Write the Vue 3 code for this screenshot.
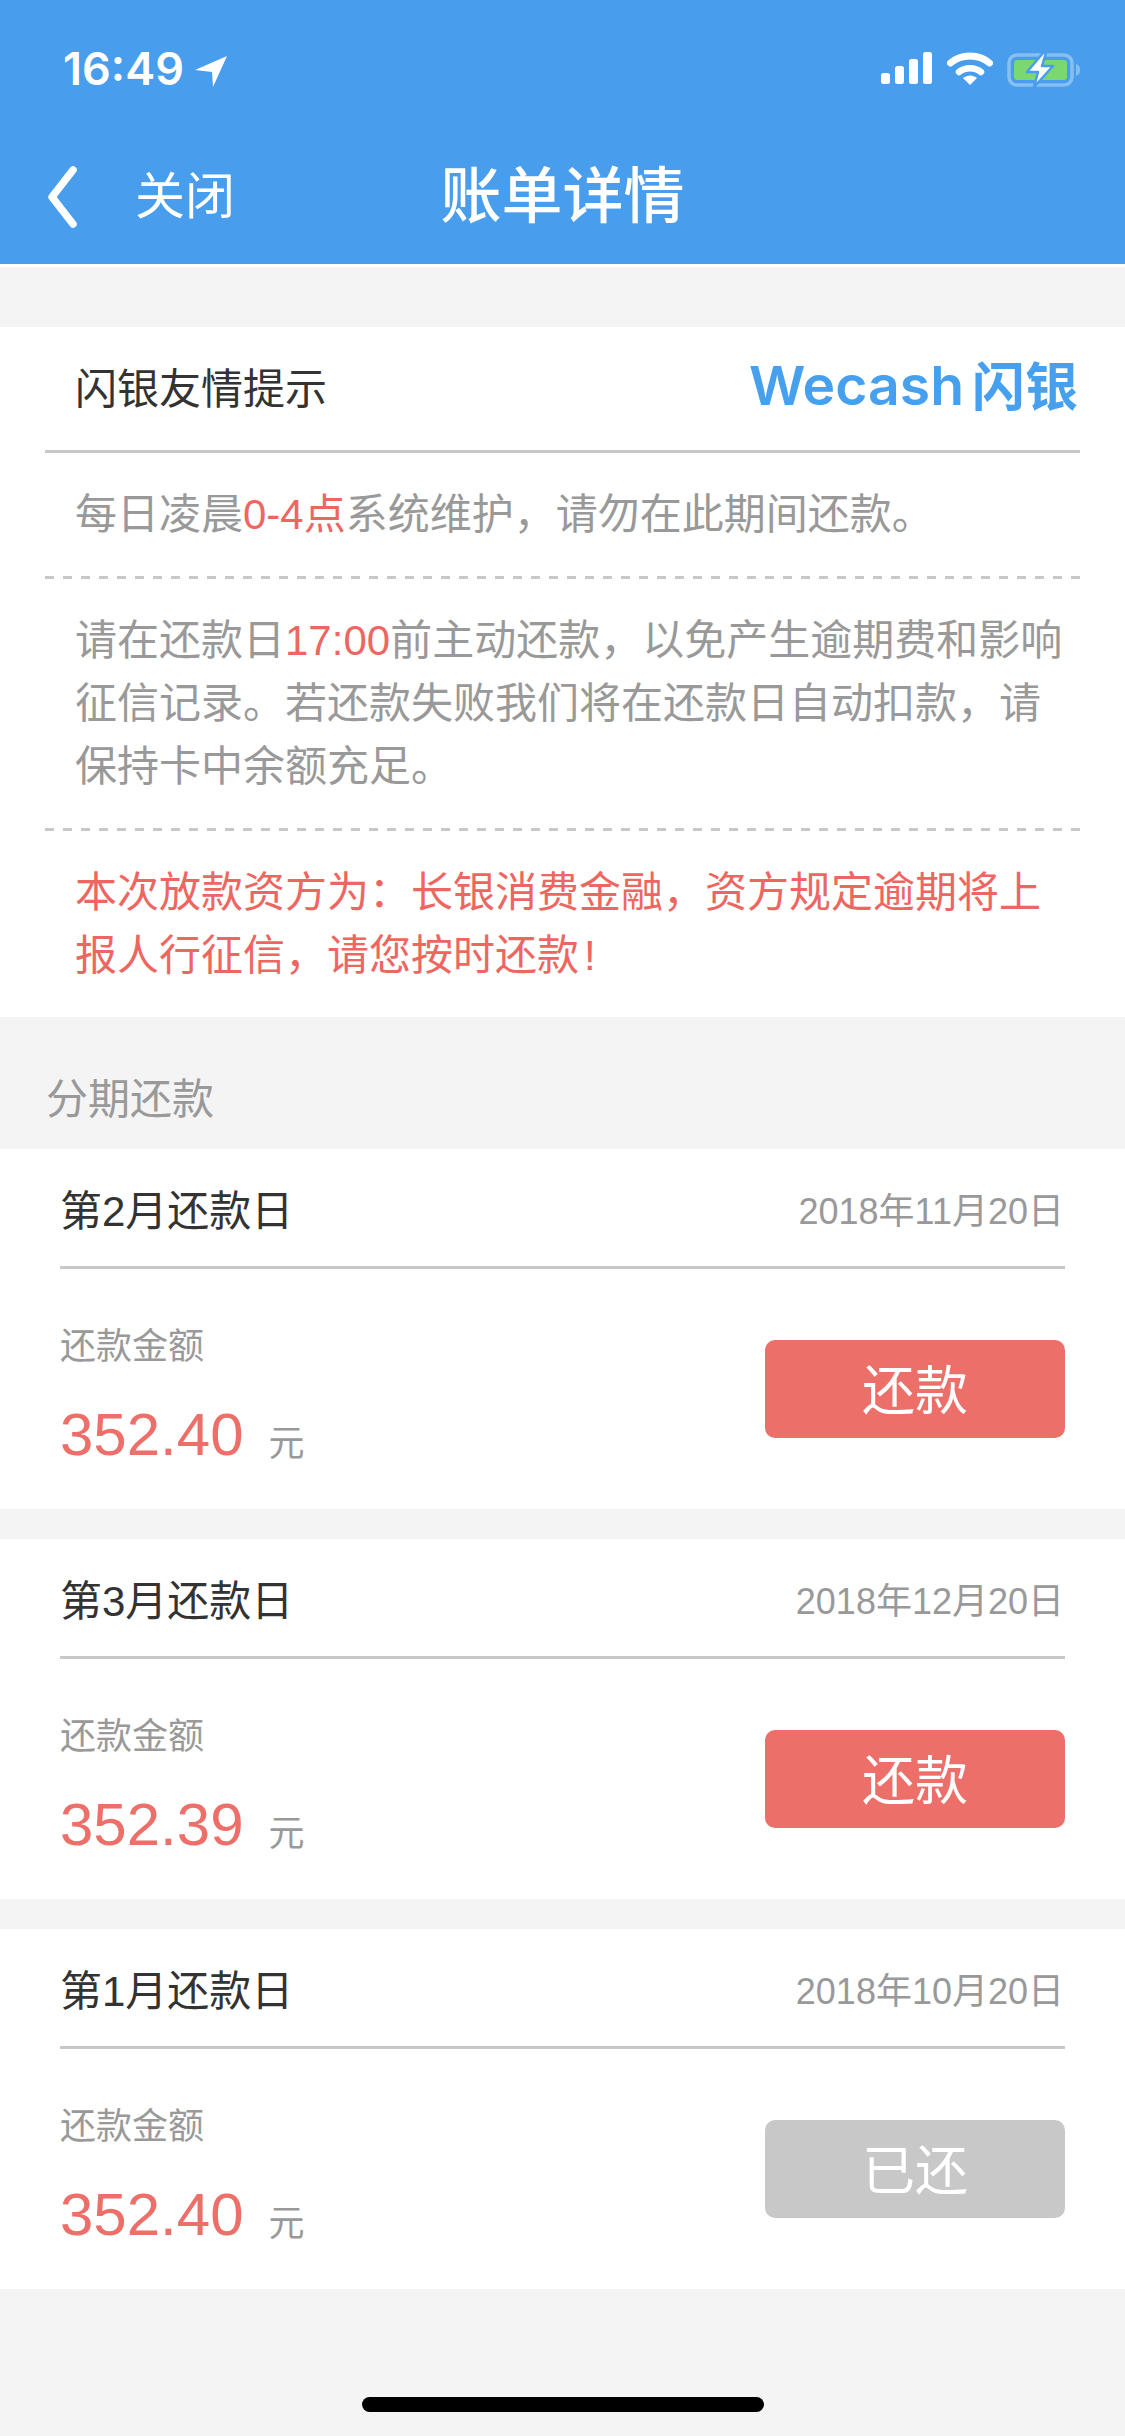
<script setup>
const bills = [
  { title: "第2月还款日", date: "2018年11月20日", amount: "352.40", paid: false },
  { title: "第3月还款日", date: "2018年12月20日", amount: "352.39", paid: false },
  { title: "第1月还款日", date: "2018年10月20日", amount: "352.40", paid: true },
];
</script>

<template>
  <div class="page">
    <header class="header">
      <div class="status">
        <div class="status-left">
          <span class="time">16:49</span>
          <svg class="loc" width="33" height="32" viewBox="0 0 33 32">
            <polygon points="32,0 0,14 17,16 18,31" fill="#fff" />
          </svg>
        </div>
        <div class="status-right">
          <svg width="52" height="32" viewBox="0 0 52 32">
            <rect x="0" y="21" width="9" height="11" rx="2.5" fill="#fff" />
            <rect x="14" y="14" width="9" height="18" rx="2.5" fill="#fff" />
            <rect x="28" y="7" width="9" height="25" rx="2.5" fill="#fff" />
            <rect x="42" y="0" width="9" height="32" rx="2.5" fill="#fff" />
          </svg>
          <svg width="46" height="33" viewBox="0 0 46 33">
            <path d="M3.5 11 C14 1.5 32 1.5 42.500 11" fill="none" stroke="#fff" stroke-width="7" stroke-linecap="round" />
            <path d="M12 20 C18 15 28 15 34 20" fill="none" stroke="#fff" stroke-width="6.500" stroke-linecap="round" />
            <path d="M16 26 C20 22.500 26 22.500 30 26 L23 33 Z" fill="#fff" />
          </svg>
          <svg width="74" height="36" viewBox="0 0 74 36">
            <rect x="2" y="3" width="63" height="30" rx="8" fill="none" stroke="#fff" stroke-opacity="0.35" stroke-width="3.500" />
            <path d="M69 12 C72 13 73 15 73 18 C73 21 72 23 69 24 Z" fill="#fff" fill-opacity="0.35" />
            <rect x="7" y="8" width="53" height="20" rx="3" fill="#7bd76f" />
            <polygon points="36,1 20,20 31,20 27,35 46,14 35,14 39,1" fill="#fff" stroke="#489ded" stroke-width="2.500" stroke-linejoin="round" />
          </svg>
        </div>
      </div>
      <nav class="nav">
        <div class="nav-back">
          <svg width="30" height="62" viewBox="0 0 30 62">
            <polyline points="25,4 4,31 25,58" fill="none" stroke="#fff" stroke-width="7.500" stroke-linecap="round" stroke-linejoin="round" />
          </svg>
          <span class="close">关闭</span>
        </div>
        <h1 class="title">账单详情</h1>
        <div></div>
      </nav>
    </header>

    <section class="tips">
      <div class="tips-inner">
        <div class="tips-head">
          <span class="tips-title">闪银友情提示</span>
          <svg class="logo" width="332" height="60" viewBox="0 0 332 60">
            <text x="1" y="46" class="logo-en" textLength="215" lengthAdjust="spacingAndGlyphs">Wecash</text>
            <text x="224" y="47" class="logo-cn" textLength="106" lengthAdjust="spacingAndGlyphs">闪银</text>
          </svg>
        </div>
        <p class="tip">每日凌晨<span class="red">0-4点</span>系统维护，请勿在此期间还款。</p>
        <p class="tip dashed">请在还款日<span class="red">17:00</span>前主动还款，以免产生逾期费和影响征信记录。若还款失败我们将在还款日自动扣款，请保持卡中余额充足。</p>
        <p class="tip dashed red">本次放款资方为：长银消费金融，资方规定逾期将上报人行征信，请您按时还款<span class="bang">!</span></p>
      </div>
    </section>

    <div class="section-label">分期还款</div>

    <section v-for="bill in bills" :key="bill.title" class="bill">
      <div class="bill-head">
        <span class="bill-title">{{ bill.title }}</span>
        <span class="bill-date">{{ bill.date }}</span>
      </div>
      <div class="bill-body">
        <div class="bill-money">
          <div class="money-label">还款金额</div>
          <div class="money-row">
            <span class="amount">{{ bill.amount }}</span>
            <span class="unit">元</span>
          </div>
        </div>
        <button class="pay" :class="{ paid: bill.paid }">{{ bill.paid ? "已还" : "还款" }}</button>
      </div>
    </section>

    <div class="home-bar"></div>
  </div>
</template>

<style scoped>
.page {
  width: 1125px;
  height: 2436px;
  overflow: hidden;
  display: flex;
  flex-direction: column;
  background: #f4f4f4;
  font-family: "Liberation Sans", "Noto Sans CJK SC", sans-serif;
}

.header {
  height: 264px;
  border-bottom: 3px solid #fff;
  background: #489ded;
  color: #fff;
  flex-shrink: 0;
}

.status {
  height: 138px;
  padding: 52px 44px 0 63px;
  box-sizing: border-box;
  display: flex;
  justify-content: space-between;
  align-items: flex-start;
}

.status-left {
  display: flex;
  align-items: flex-start;
}

.time {
  font-family: Inter, "Liberation Sans", sans-serif;
  font-size: 45px;
  font-weight: 600;
  line-height: 34px;
}

.loc {
  margin: 4px 0 0 11px;
}

.status-right {
  display: flex;
  align-items: flex-start;
  gap: 14px;
}

.nav {
  display: grid;
  grid-template-columns: 1fr auto 1fr;
  align-items: center;
  height: 118px;
}

.nav-back {
  display: flex;
  align-items: center;
  padding-left: 48px;
}

.close {
  font-size: 50px;
  line-height: 60px;
  margin-left: 57px;
}

.title {
  margin: 0;
  font-size: 61px;
  font-weight: 500;
  line-height: 70px;
}

.tips {
  margin-top: 60px;
  height: 690px;
  background: #fff;
  flex-shrink: 0;
}

.tips-inner {
  padding: 0 45px;
}

.tips-head {
  height: 123px;
  border-bottom: 3px solid #c8c8c8;
  padding-left: 30px;
  display: flex;
  justify-content: space-between;
  align-items: center;
  color: #333;
}

.tips-title {
  font-size: 42px;
  margin-bottom: 6px;
}

.logo {
  overflow: visible;
}

.logo-en {
  font-family: Inter, sans-serif;
  font-size: 54px;
  font-weight: 600;
  fill: #46a0ee;
}

.logo-cn {
  font-family: "Noto Sans CJK SC", sans-serif;
  font-size: 52px;
  font-weight: 700;
  fill: #46a0ee;
}

.tip {
  margin: 0;
  padding: 30px 0 30px 30px;
  font-size: 42px;
  line-height: 63px;
  color: #999;
}

.tip.dashed {
  background: repeating-linear-gradient(to right, #c8c8c8 0 9px, transparent 9px 18px) top left / 100% 3px no-repeat;
  padding-top: 33px;
}

.red {
  color: #ee6661;
}

.tip.red {
  color: #ee6661;
}

.bang {
  margin-left: 5px;
}

.section-label {
  height: 114px;
  padding: 0 0 18px 46px;
  display: flex;
  align-items: flex-end;
  font-size: 42px;
  line-height: 63px;
  color: #999;
  flex-shrink: 0;
}

.bill {
  height: 360px;
  margin-bottom: 30px;
  padding: 0 60px;
  background: #fff;
  box-sizing: border-box;
  flex-shrink: 0;
}

.bill-head {
  height: 117px;
  border-bottom: 3px solid #c8c8c8;
  display: flex;
  justify-content: space-between;
  align-items: center;
}

.bill-title {
  font-size: 42px;
  color: #333;
}

.bill-date {
  font-size: 36px;
  color: #999;
  margin-right: 1px;
}

.bill-body {
  height: 240px;
  display: flex;
  justify-content: space-between;
  align-items: center;
}

.bill-money {
  margin-top: 13px;
}

.money-label {
  font-size: 36px;
  line-height: 50px;
  color: #999;
}

.money-row {
  margin-top: 27px;
  height: 70px;
  display: flex;
  align-items: center;
}

.amount {
  font-size: 60px;
  color: #ed6f69;
}

.unit {
  margin: 12px 0 0 25px;
  font-size: 36px;
  color: #999;
}

.pay {
  width: 300px;
  height: 98px;
  border: none;
  border-radius: 10px;
  background: #ed6f69;
  color: #fff;
  font-family: inherit;
  font-size: 53px;
  padding: 0 0 4px;
}

.pay.paid {
  background: #c8c8c8;
}

.home-bar {
  width: 402px;
  height: 15px;
  margin: auto auto 24px;
  border-radius: 8px;
  background: #000;
}
</style>

<style>
html,
body {
  margin: 0;
  background: #f4f4f4;
}
</style>
